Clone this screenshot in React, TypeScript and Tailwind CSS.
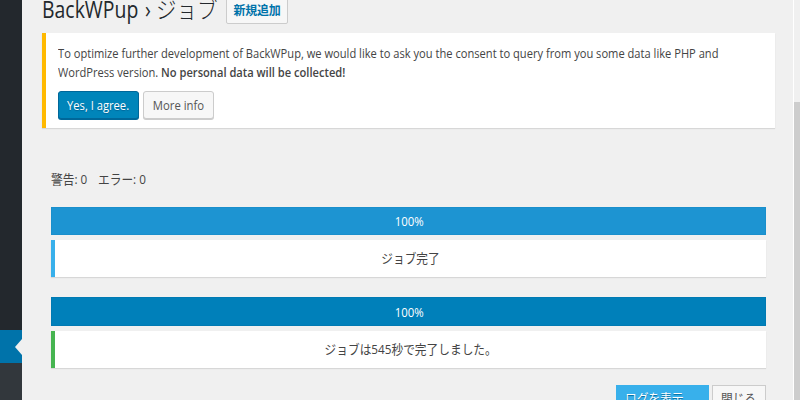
import type { ReactNode } from "react";

type StepProps = {
  barClass: string;
  edgeClass: string;
  children: ReactNode;
};

function ProgressStep({ barClass, edgeClass, children }: StepProps) {
  return (
    <section>
      <div
        className={`flex items-center justify-center border pt-[2px] pl-[2px] text-[12px] text-white ${barClass}`}
      >
        <span className="inline-block scale-x-95">100%</span>
      </div>
      <div
        className={`flex h-[37px] items-center justify-center border-l-4 bg-white text-[13px] text-[#444] shadow-[0_1px_1px_rgba(0,0,0,0.1)] ${edgeClass}`}
      >
        {children}
      </div>
    </section>
  );
}

export default function App() {
  return (
    <div className="flex h-[400px] w-[800px] overflow-hidden bg-[#f0f0f0] font-['Open_Sans','Noto_Sans_CJK_JP',sans-serif] text-[#444]">
      {/* Admin menu */}
      <aside className="flex w-[22px] shrink-0 flex-col bg-[#23282d]">
        <div className="mt-[330px] flex h-[33px] items-center justify-end bg-[#0073aa]">
          <div className="border-y-8 border-r-[7px] border-y-transparent border-r-[#f0f0f0]" />
        </div>
        <div className="flex-1 bg-[#32373c]" />
      </aside>

      <main className="h-[400px] w-[771px] shrink-0 overflow-hidden pl-5">
        <header className="flex h-[33px] items-start">
          <h1 className="-mt-[7px] flex h-[33px] w-[184px] whitespace-nowrap text-[23px] leading-[33px] text-[#23282d]">
            <span className="w-[114px]">
              <span className="inline-block origin-left scale-x-[0.845] [word-spacing:2px]">BackWPup ›</span>
            </span>
            <span className="inline-block origin-left scale-x-[0.89] font-light">ジョブ</span>
          </h1>
          <button className="-mt-1 flex h-7 w-[62px] items-center justify-center whitespace-nowrap rounded-[2px] border border-[#ccc] bg-[#f7f7f7] pt-[2px] text-[12px] font-bold tracking-[-0.3px] text-[#0073aa]">
            新規追加
          </button>
        </header>

        {/* Consent notice */}
        <div className="flex h-[95px] w-[733px] justify-between border-l-4 border-[#ffb900] bg-white pl-3 shadow-[0_1px_1px_rgba(0,0,0,0.1)]">
          <div>
            <p className="mt-[11px] whitespace-nowrap text-[13px] leading-[19px]">
              <span className="block w-max origin-left scale-x-[0.856]">
                To optimize further development of BackWPup, we would like to ask you the consent to query from you some data like PHP and
              </span>
              <span className="block w-max origin-left scale-x-[0.856]">
                WordPress version. <strong className="font-semibold">No personal data will be collected!</strong>
              </span>
            </p>
            <div className="mt-[9px] flex gap-1">
              <button className="flex h-7 w-[81px] items-center justify-center whitespace-nowrap rounded-[3px] border border-[#006799] bg-[#0085ba] pt-[2px] text-[13px] text-white shadow-[0_1px_0_#006799] [text-shadow:0_1px_1px_#006799]">
                <span className="inline-block scale-x-[0.86]">Yes, I agree.</span>
              </button>
              <button className="flex h-7 w-[71px] items-center justify-center whitespace-nowrap rounded-[3px] border border-[#ccc] bg-[#f7f7f7] pt-[2px] text-[13px] text-[#555] shadow-[0_1px_0_#ccc]">
                <span className="inline-block scale-x-[0.87]">More info</span>
              </button>
            </div>
          </div>
          <svg className="mt-[11px] mr-3 h-3 w-3" viewBox="0 0 12 12">
            <circle cx="6" cy="6" r="6" fill="#b4b9be" />
            <path d="M3.6 3.6l4.8 4.8M8.4 3.6L3.6 8.4" stroke="#fff" strokeWidth="2" />
          </svg>
        </div>

        <div className="ml-[9px] w-[715px]">
          <p className="mt-[42px] flex h-5 items-center whitespace-nowrap text-[13px]">
            <span className="w-[47px]">
              <span className="inline-block origin-left scale-x-[0.9]">警告: 0</span>
            </span>
            <span className="inline-block origin-left scale-x-[0.9]">エラー: 0</span>
          </p>

          <div className="mt-[17px] flex flex-col gap-5">
            <ProgressStep
              barClass="mb-[5px] h-7 border-[#1a8fcc] bg-[#1d94d2]"
              edgeClass="border-[#38b0eb]"
            >
              <span className="inline-block scale-x-[0.9]">ジョブ完了</span>
            </ProgressStep>
            <ProgressStep
              barClass="mb-[5px] h-[29px] border-[#007ab3] bg-[#0080ba]"
              edgeClass="border-[#46b450]"
            >
              <span className="inline-block scale-x-[0.9]">ジョブは545秒で完了しました。</span>
            </ProgressStep>
          </div>

          <div className="mt-[17px] flex justify-end gap-[3px] whitespace-nowrap text-[13px]">
            <button className="flex h-7 w-[93px] items-center border border-[#38b0eb] bg-[#38b0eb] pl-2 text-white [text-shadow:0_1px_1px_#006799]">
              <span className="inline-block origin-left scale-x-[0.9]">ログを表示</span>
            </button>
            <button className="flex h-7 w-[54px] items-center justify-center border border-[#ccc] bg-[#f7f7f7] text-[#555]">
              <span className="inline-block scale-x-[0.9]">閉じる</span>
            </button>
          </div>
        </div>
      </main>

      {/* Scrollbar */}
      <div className="w-[7px] shrink-0 border-l border-white bg-[#f0f0f0]">
        <div className="mt-[102px] h-[298px] bg-[#cdcdcd]" />
      </div>
    </div>
  );
}
